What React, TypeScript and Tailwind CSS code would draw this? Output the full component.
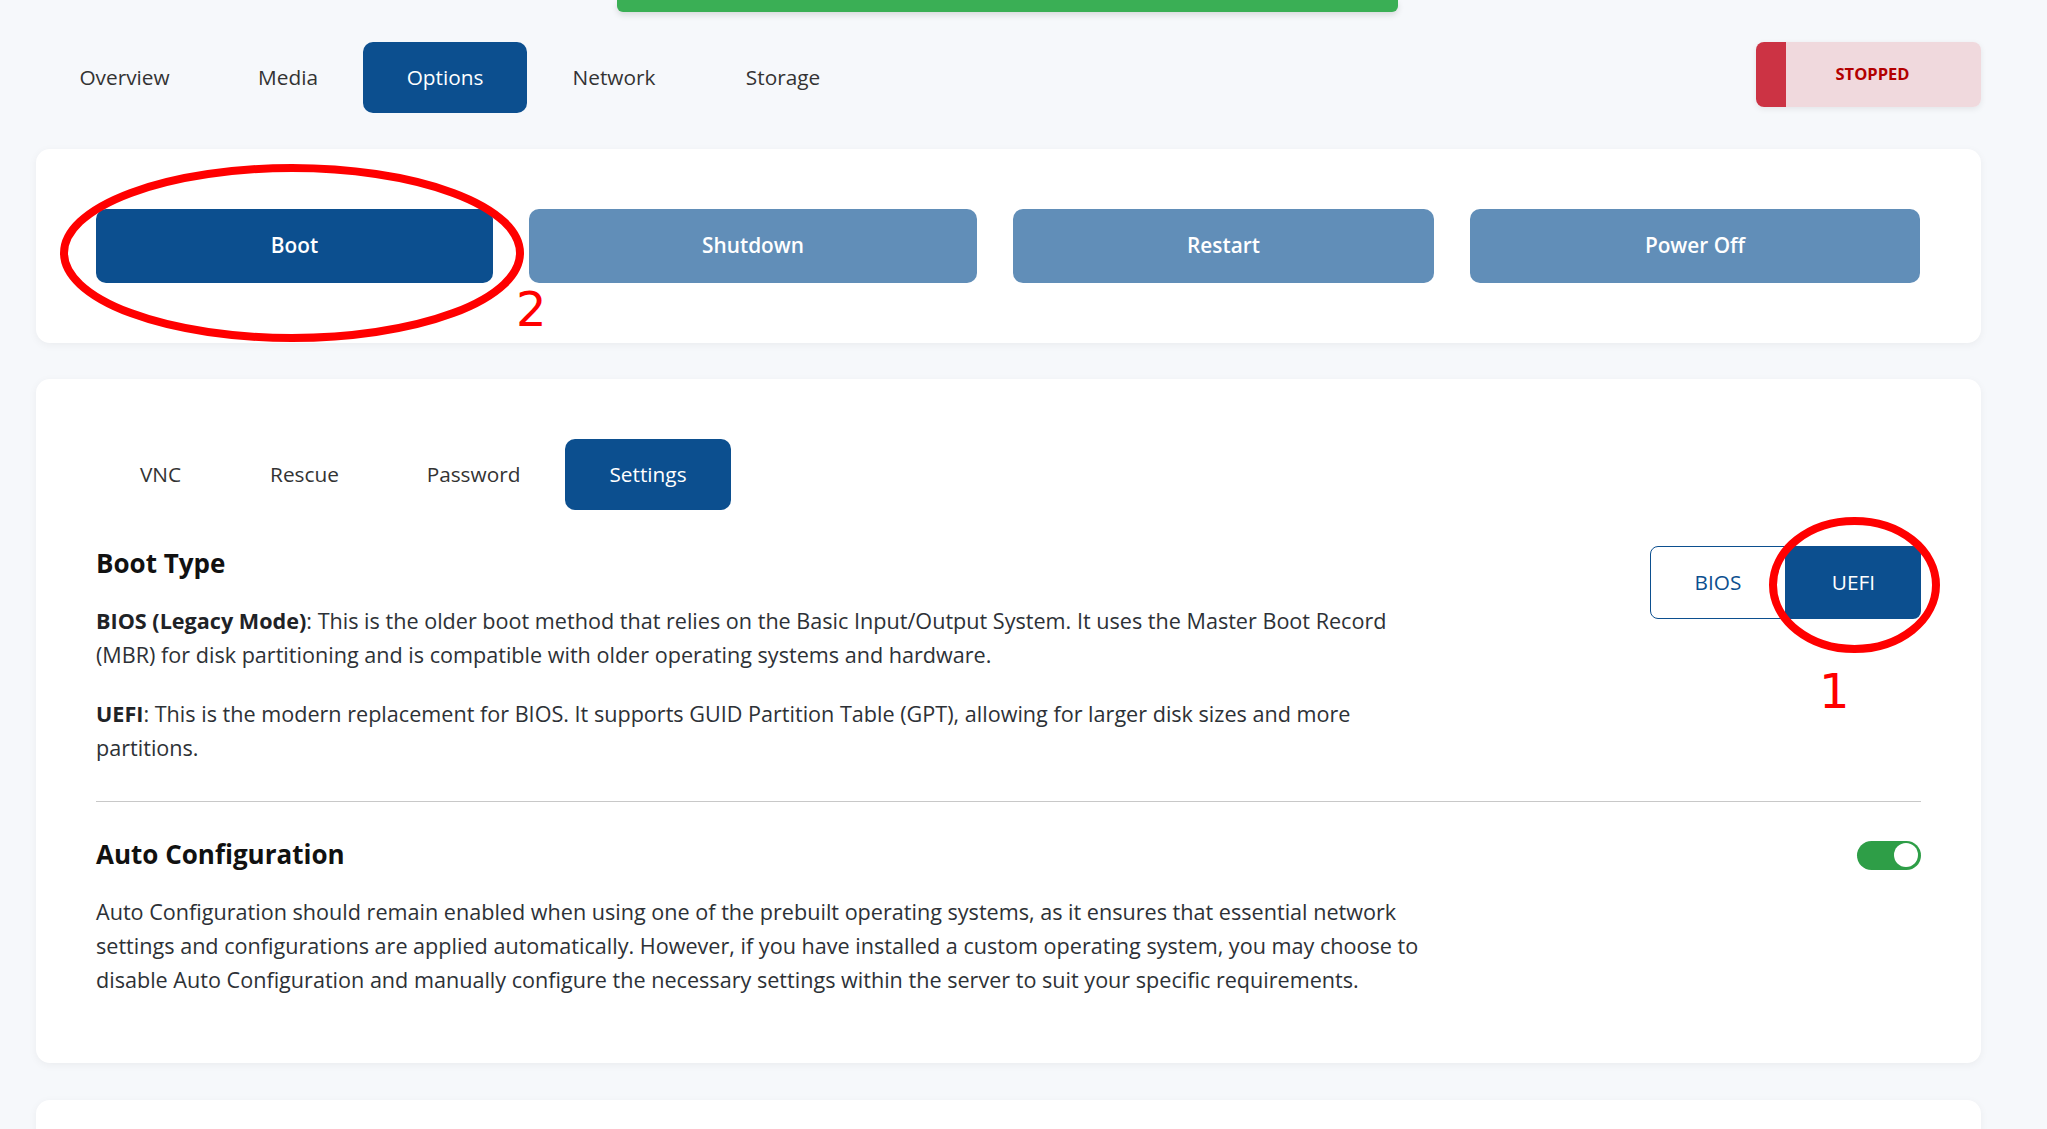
import React from "react";

const FONT = { fontFamily: '"Open Sans", "Noto Sans", sans-serif' };

function Tab({ label, w, active }: { label: string; w: string; active?: boolean }) {
  return (
    <div
      className={`${w} h-[71px] flex items-center justify-center rounded-[10px] text-[20.8px] ${
        active ? "bg-[#0c4f8f] text-white" : "text-[#333333]"
      }`}
    >
      {label}
    </div>
  );
}

export default function App() {
  return (
    <div className="relative min-h-[1129px] w-full overflow-hidden bg-[#f6f8fb]" style={FONT}>
      {/* green toast bar */}
      <div className="absolute left-[617px] top-0 w-[781px] h-[12px] rounded-b-[6px] bg-[#3aaf55] shadow-[0_3px_6px_rgba(0,0,0,0.12)]" />

      <div className="pl-[36px] pr-[66px] pt-[42px]">
        {/* top nav */}
        <div className="flex items-start justify-between">
          <div className="flex gap-[2px]">
            <Tab label="Overview" w="w-[177px]" />
            <Tab label="Media" w="w-[146px]" />
            <Tab label="Options" w="w-[164px]" active />
            <Tab label="Network" w="w-[170px]" />
            <Tab label="Storage" w="w-[164px]" />
          </div>
          <div className="flex w-[225px] h-[65px] rounded-[8px] overflow-hidden shadow-[0_2px_6px_rgba(0,0,0,0.08)]">
            <div className="w-[30px] bg-[#cc3344]" />
            <div className="flex-1 bg-[#f0d9dd] flex items-center justify-center pr-[22px] text-[16.5px] font-bold text-[#b30000]">
              STOPPED
            </div>
          </div>
        </div>

        {/* power card */}
        <div className="mt-[36px] bg-white rounded-[14px] p-[60px] flex gap-[36px] shadow-[0_2px_8px_rgba(0,0,0,0.05)]">
          <button className="w-[397px] h-[74px] rounded-[10px] bg-[#0c4f8f] text-white text-[20.8px] font-semibold">
            Boot
          </button>
          <button className="w-[448px] h-[74px] rounded-[10px] bg-[#618eb8] text-white text-[20.8px] font-semibold">
            Shutdown
          </button>
          <button className="w-[421px] h-[74px] rounded-[10px] bg-[#618eb8] text-white text-[20.8px] font-semibold">
            Restart
          </button>
          <button className="w-[450px] h-[74px] rounded-[10px] bg-[#618eb8] text-white text-[20.8px] font-semibold">
            Power Off
          </button>
        </div>

        {/* settings card */}
        <div className="mt-[36px] bg-white rounded-[14px] px-[60px] pt-[60px] pb-[66px] shadow-[0_2px_8px_rgba(0,0,0,0.05)]">
          <div className="flex gap-[2px]">
            <Tab label="VNC" w="w-[129px]" />
            <Tab label="Rescue" w="w-[155px]" />
            <Tab label="Password" w="w-[179px]" />
            <Tab label="Settings" w="w-[166px]" active />
          </div>

          <div className="mt-[36px] flex items-start justify-between">
            <div className="text-[21.6px] leading-[34px] text-[#2d3136]">
              <h2 className="text-[26px] leading-[34px] font-bold text-[#111111] mb-[24px]">Boot Type</h2>
              <p className="whitespace-nowrap">
                <b className="font-bold text-[#1f2327]">BIOS (Legacy Mode)</b>: This is the older boot method that relies on the Basic
                Input/Output System. It uses the Master Boot Record
                <br />
                (MBR) for disk partitioning and is compatible with older operating systems and hardware.
              </p>
              <p className="mt-[25px] whitespace-nowrap">
                <b className="font-bold text-[#1f2327]">UEFI</b>: This is the modern replacement for BIOS. It supports GUID Partition
                Table (GPT), allowing for larger disk sizes and more
                <br />
                partitions.
              </p>
            </div>
            <div className="flex">
              <div className="w-[136px] h-[73px] flex items-center justify-center border border-[#0c4f8f] rounded-l-[8px] text-[#0c4f8f] text-[20.8px]">
                BIOS
              </div>
              <div className="w-[135px] h-[73px] flex items-center justify-center bg-[#0c4f8f] rounded-r-[8px] text-white text-[20.8px]">
                UEFI
              </div>
            </div>
          </div>

          <div className="mt-[36px] h-px bg-[#c8c8c8]" />

          <div className="mt-[35px] flex items-center justify-between">
            <h2 className="text-[26px] leading-[34px] font-bold text-[#111111]">Auto Configuration</h2>
            <div className="relative mt-[2px] w-[64px] h-[29px] rounded-full bg-[#2e9e47]">
              <div className="absolute right-[3px] top-[2.5px] w-[24px] h-[24px] rounded-full bg-white" />
            </div>
          </div>
          <p className="mt-[24px] text-[21.6px] leading-[34px] text-[#2d3136] whitespace-nowrap">
            Auto Configuration should remain enabled when using one of the prebuilt operating systems, as it ensures that essential
            network
            <br />
            settings and configurations are applied automatically. However, if you have installed a custom operating system, you may
            choose to
            <br />
            disable Auto Configuration and manually configure the necessary settings within the server to suit your specific
            requirements.
          </p>
        </div>

        {/* next card */}
        <div className="mt-[37px] h-[120px] bg-white rounded-t-[14px] shadow-[0_2px_8px_rgba(0,0,0,0.05)]" />
      </div>

      {/* annotations */}
      <svg className="absolute left-[60px] top-[164px]" width="464" height="178" viewBox="0 0 464 178">
        <ellipse cx="232" cy="89" rx="228" ry="85" fill="none" stroke="#ff0000" strokeWidth="8" />
      </svg>
      <div
        className="absolute left-[516px] top-[285px] text-[48px] leading-none text-[#ff0000]"
        style={{ fontFamily: '"DejaVu Sans", sans-serif' }}
      >
        2
      </div>
      <svg className="absolute left-[1769px] top-[517px]" width="171" height="136" viewBox="0 0 171 136">
        <ellipse cx="85.5" cy="68" rx="81.5" ry="64" fill="none" stroke="#ff0000" strokeWidth="8" />
      </svg>
      <div
        className="absolute left-[1819px] top-[667px] text-[48px] leading-none text-[#ff0000]"
        style={{ fontFamily: '"DejaVu Sans", sans-serif' }}
      >
        1
      </div>
    </div>
  );
}
